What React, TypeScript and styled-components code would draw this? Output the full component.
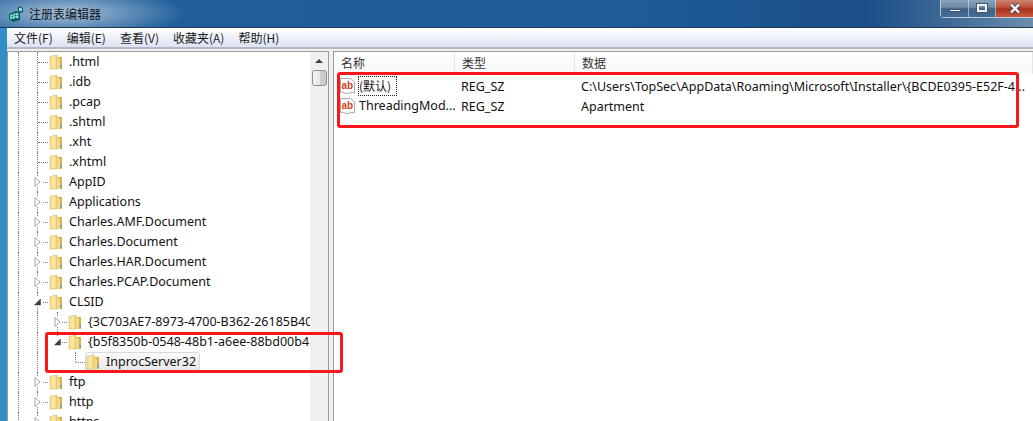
import styled, { createGlobalStyle } from 'styled-components';

const GlobalStyle = createGlobalStyle`
  html, body {
    margin: 0;
    padding: 0;
    background: #fff;
  }
`;

const fontStack = `"Noto Sans", "Noto Sans CJK SC", sans-serif`;
const cjkStack = `"Noto Sans CJK SC", "Noto Sans", sans-serif`;

const Window = styled.div`
  width: 1033px;
  height: 421px;
  overflow: hidden;
  position: relative;
  display: flex;
  flex-direction: column;
  background: #2f8fc6;
  font-family: ${fontStack};
  font-size: 12.5px;
  color: #111;
`;

const TitleBar = styled.div`
  height: 27px;
  flex: none;
  display: flex;
  align-items: flex-start;
  padding-left: 8px;
  border-bottom: 1px solid #1c3a58;
  background:
    radial-gradient(ellipse 120px 26px at 66px 13px, rgba(255, 255, 255, 0.62), rgba(255, 255, 255, 0) 100%),
    linear-gradient(90deg, #1f5f9c 0%, #1f5c98 60%, #1a4f88 84%, #3f6a96 92%, #6d8dae 100%);
`;

const TitleIcon = styled.svg`
  width: 16px;
  height: 16px;
  margin-top: 6px;
  flex: none;
`;

const TitleText = styled.span`
  margin: 5px 0 0 5px;
  font-family: ${cjkStack};
  font-size: 12px;
  line-height: 17px;
  color: #10161c;
`;

const Controls = styled.div`
  margin-left: auto;
  margin-top: -1px;
  display: flex;
  height: 18px;
  border: 1px solid rgba(225, 235, 245, 0.75);
  border-top: none;
  border-right: none;
  border-radius: 0 0 0 4px;
  box-sizing: content-box;
`;

const ControlButton = styled.div<{ $width: number; $close?: boolean }>`
  width: ${(p) => p.$width}px;
  display: flex;
  align-items: center;
  justify-content: center;
  border-right: ${(p) => (p.$close ? 'none' : '1px solid rgba(225, 235, 245, 0.55)')};
  background: ${(p) =>
    p.$close
      ? 'linear-gradient(180deg, #cf8c7e 0%, #c0503c 45%, #a8301e 55%, #c85a3c 100%)'
      : 'linear-gradient(180deg, #8ea6be 0%, #6d8aa8 45%, #3f6288 55%, #456c94 100%)'};
`;

const MinGlyph = styled.div`
  width: 10px;
  height: 3px;
  margin-top: 5px;
  background: #f4f6f8;
  border: 1px solid #45566a;
  box-sizing: content-box;
  height: 1px;
`;

const MaxGlyph = styled.div`
  width: 6px;
  height: 4px;
  border: 2px solid #f0f3f6;
  outline: 1px solid #45566a;
  box-sizing: content-box;
`;

const MenuBar = styled.div`
  height: 19px;
  flex: none;
  margin-left: 7px;
  display: flex;
  align-items: center;
  border-bottom: 2px solid #b4b8c4;
  background: linear-gradient(180deg, #ffffff 0%, #f4f6fb 30%, #dde3f3 100%);
`;

const MenuItem = styled.span`
  padding: 0 7px;
  font-family: ${cjkStack};
  font-size: 12px;
  line-height: 19px;
  color: #1a1a1a;
  white-space: nowrap;
`;

const Body = styled.div`
  flex: 1;
  min-height: 0;
  margin-left: 7px;
  display: flex;
  background: #f0f0f0;
  padding-top: 2px;
`;

const TreePane = styled.div`
  width: 322px;
  flex: none;
  display: flex;
  border: 1px solid #9a9a9a;
  border-bottom: none;
  background: #fff;
  box-sizing: border-box;
`;

const TreeList = styled.div`
  flex: 1;
  min-width: 0;
  overflow: hidden;
  padding-left: 10px;
  margin-top: 0;
`;

const TreeRow = styled.div`
  height: 20px;
  display: flex;
  white-space: nowrap;
`;

const Guide = styled.div<{ $width: number; $blank?: boolean }>`
  width: ${(p) => p.$width}px;
  flex: none;
  box-sizing: border-box;
  border-left: 1px ${(p) => (p.$blank ? 'none' : 'dotted')} #7d7d7d;
  margin-left: ${(p) => (p.$blank ? '1px' : '0')};
`;

const Connector = styled.div<{ $width: number; $elbow?: boolean }>`
  width: ${(p) => p.$width}px;
  flex: none;
  position: relative;

  &::before {
    content: '';
    position: absolute;
    left: 0;
    top: 0;
    height: ${(p) => (p.$elbow ? '10px' : '20px')};
    border-left: 1px dotted #7d7d7d;
  }

  &::after {
    content: '';
    position: absolute;
    left: 1px;
    right: 0;
    top: 10px;
    border-top: 1px dotted #7d7d7d;
  }
`;

const Expander = styled.svg`
  position: absolute;
  left: -4px;
  top: 5px;
  width: 9px;
  height: 10px;
  background: #fff;
  z-index: 1;
`;

const TreeItem = styled.div<{ $selected?: boolean }>`
  display: flex;
  align-items: center;
  gap: 6px;
  height: 20px;
  box-sizing: border-box;
  padding-right: ${(p) => (p.$selected ? '3px' : '0')};
  border: 1px solid ${(p) => (p.$selected ? '#d9d9d9' : 'transparent')};
  border-radius: 3px;
  background: ${(p) => (p.$selected ? 'linear-gradient(180deg, #fafafa, #e6e6e6)' : 'transparent')};
`;

const FolderSvg = styled.svg`
  width: 14px;
  height: 16px;
  flex: none;
`;

const ItemLabel = styled.span`
  line-height: 18px;
  color: #111;
`;

const ScrollBar = styled.div`
  width: 18px;
  flex: none;
  display: flex;
  flex-direction: column;
  align-items: center;
  background: #f0f0f0;
`;

const ScrollArrow = styled.div`
  height: 18px;
  width: 100%;
  display: flex;
  align-items: center;
  justify-content: center;

  &::before {
    content: '';
    border-left: 4px solid transparent;
    border-right: 4px solid transparent;
    border-bottom: 4px solid #404040;
  }
`;

const ScrollThumb = styled.div`
  width: 15px;
  height: 16px;
  box-sizing: border-box;
  border: 1px solid #8e8f8f;
  border-radius: 3px;
  background: linear-gradient(90deg, #f4f4f4 0%, #e8e8e8 50%, #d0d0d0 55%, #c8c8c8 100%);
`;

const Splitter = styled.div`
  width: 4px;
  flex: none;
`;

const ListPane = styled.div`
  flex: 1;
  min-width: 0;
  border: 1px solid #9a9a9a;
  border-right: none;
  border-bottom: none;
  background: #fff;
`;

const ColumnsHeader = styled.div`
  display: grid;
  grid-template-columns: 121px 120px 1fr;
  height: 21px;
  background: linear-gradient(180deg, #ffffff, #f7f8f9);
`;

const HeaderCell = styled.div`
  padding-left: 7px;
  font-family: ${cjkStack};
  font-size: 12px;
  line-height: 22px;
  color: #333;
  border-right: 1px solid #e3e5e7;
`;

const ValueRows = styled.div`
  padding-top: 3px;
`;

const ValueRow = styled.div`
  display: grid;
  grid-template-columns: 121px 120px 1fr;
  height: 20px;
  align-items: center;
`;

const NameCell = styled.div`
  display: flex;
  align-items: center;
  padding-left: 5px;
  gap: 2px;
  white-space: nowrap;
`;

const RegIcon = styled.svg`
  width: 17px;
  height: 18px;
  flex: none;
`;

const NameText = styled.span<{ $focused?: boolean }>`
  padding: 0 ${(p) => (p.$focused ? '6px' : '0')} 0 1px;
  height: 20px;
  line-height: 19px;
  outline: ${(p) => (p.$focused ? '1px dotted #222' : 'none')};
  outline-offset: -1px;
  font-family: ${(p) => (p.$focused ? cjkStack : fontStack)};
  font-size: ${(p) => (p.$focused ? '12px' : '12.5px')};
`;

const ValueCell = styled.div`
  padding-left: 6px;
  white-space: nowrap;
  overflow: hidden;
`;

const RedFrame = styled.div<{ $x: number; $y: number; $w: number; $h: number }>`
  position: absolute;
  left: ${(p) => p.$x}px;
  top: ${(p) => p.$y}px;
  width: ${(p) => p.$w}px;
  height: ${(p) => p.$h}px;
  box-sizing: border-box;
  border: 3px solid #f8181c;
  border-radius: 3px;
  pointer-events: none;
  z-index: 3;
`;

type TreeNode = {
  label: string;
  level: 1 | 2 | 3;
  state?: 'open' | 'closed';
  last?: boolean;
  selected?: boolean;
};

const nodes: TreeNode[] = [
  { label: '.html', level: 1 },
  { label: '.idb', level: 1 },
  { label: '.pcap', level: 1 },
  { label: '.shtml', level: 1 },
  { label: '.xht', level: 1 },
  { label: '.xhtml', level: 1 },
  { label: 'AppID', level: 1, state: 'closed' },
  { label: 'Applications', level: 1, state: 'closed' },
  { label: 'Charles.AMF.Document', level: 1, state: 'closed' },
  { label: 'Charles.Document', level: 1, state: 'closed' },
  { label: 'Charles.HAR.Document', level: 1, state: 'closed' },
  { label: 'Charles.PCAP.Document', level: 1, state: 'closed' },
  { label: 'CLSID', level: 1, state: 'open' },
  { label: '{3C703AE7-8973-4700-B362-26185B40', level: 2, state: 'closed' },
  { label: '{b5f8350b-0548-48b1-a6ee-88bd00b4', level: 2, state: 'open', last: true },
  { label: 'InprocServer32', level: 3, last: true, selected: true },
  { label: 'ftp', level: 1, state: 'closed' },
  { label: 'http', level: 1, state: 'closed' },
  { label: 'https', level: 1, state: 'closed' },
];

function Folder() {
  return (
    <FolderSvg viewBox='0 0 14 16'>
      <defs>
        <linearGradient id='folderFront' x1='0' y1='0' x2='1' y2='0'>
          <stop offset='0' stopColor='#f3dc8c' />
          <stop offset='0.6' stopColor='#f8e9ae' />
          <stop offset='1' stopColor='#eccb66' />
        </linearGradient>
      </defs>
      <path d='M1 2.5 L8 1 L8 15 L1 15 Z' fill='url(#folderFront)' stroke='#d9b95c' strokeWidth='0.6' />
      <path d='M8 3 L13 3 L13 15 L8 15 Z' fill='#d8b24a' />
      <path d='M8 3 L11 5 L11 15 L8 15 Z' fill='#f2d98a' />
      <rect x='11.5' y='11' width='1.5' height='2.5' fill='#4aa0c8' />
    </FolderSvg>
  );
}

function ExpanderIcon({ open }: { open: boolean }) {
  return (
    <Expander viewBox='0 0 9 10'>
      {open ? (
        <path d='M7.5 2 L7.5 8 L1.5 8 Z' fill='#3c3c3c' stroke='#3c3c3c' strokeWidth='0.5' />
      ) : (
        <path d='M2 0.5 L7 5 L2 9.5 Z' fill='#fff' stroke='#a6a6a6' strokeWidth='1' />
      )}
    </Expander>
  );
}

function Node({ node }: { node: TreeNode }) {
  const connectorWidth = node.level === 1 ? 11 : 10;
  return (
    <TreeRow>
      <Guide $width={19} />
      {node.level >= 2 && <Guide $width={20} />}
      {node.level === 3 && <Guide $width={17} $blank />}
      <Connector $width={connectorWidth} $elbow={node.last}>
        {node.state && <ExpanderIcon open={node.state === 'open'} />}
      </Connector>
      <TreeItem $selected={node.selected}>
        <Folder />
        <ItemLabel>{node.label}</ItemLabel>
      </TreeItem>
    </TreeRow>
  );
}

function RegValueIcon() {
  return (
    <RegIcon viewBox='0 0 17 18'>
      <path
        d='M1.5 1.5 L11.5 1.5 L15.5 5 L15.5 16 Q13 14.5 10.5 16 Q7 17.5 4.5 15.5 Q3 15 1.5 15.5 Z'
        fill='#fff'
        stroke='#a8a8a8'
        strokeWidth='1'
      />
      <text x='2.5' y='11.5' fontFamily='"Liberation Sans", sans-serif' fontWeight='700' fontSize='10' fill='#d2431c'>
        ab
      </text>
    </RegIcon>
  );
}

export default function App() {
  return (
    <Window>
      <GlobalStyle />
      <TitleBar>
        <TitleIcon viewBox='0 0 16 16'>
          <path d='M1 8 L8 5 L12 7 L12 14 L5 16 L1 13 Z' fill='#0f5a5a' />
          <path d='M2 9 L4.5 8 L4.5 10 L2 11 Z M5 8 L7.5 7 L7.5 9 L5 10 Z M8 7 L10.5 7.5 L10.5 9.5 L8 9 Z M2 11.5 L4.5 10.5 L4.5 13 L2 13 Z M5 10.5 L7.5 9.5 L7.5 12 L5 13 Z M8 9.5 L10.5 10 L10.5 12.5 L8 12 Z' fill='#7fe8e0' />
          <path d='M10 1 L13 0.5 L15 2.5 L15 6 L12 7 L10 5 Z' fill='#0f4a4a' />
          <path d='M11 2 L13 1.5 L14 3 L14 5 L12 5.5 L11 4 Z' fill='#8ff0e8' />
        </TitleIcon>
        <TitleText>注册表编辑器</TitleText>
        <Controls>
          <ControlButton $width={27}>
            <MinGlyph />
          </ControlButton>
          <ControlButton $width={26}>
            <MaxGlyph />
          </ControlButton>
          <ControlButton $width={37} $close>
            <svg width='12' height='11' viewBox='0 0 12 11'>
              <path d='M2 1.5 L10 9.5 M10 1.5 L2 9.5' stroke='#4a4a55' strokeWidth='4' />
              <path d='M2 1.5 L10 9.5 M10 1.5 L2 9.5' stroke='#f4f4f4' strokeWidth='2.4' />
            </svg>
          </ControlButton>
        </Controls>
      </TitleBar>
      <MenuBar>
        <MenuItem>文件(F)</MenuItem>
        <MenuItem>编辑(E)</MenuItem>
        <MenuItem>查看(V)</MenuItem>
        <MenuItem>收藏夹(A)</MenuItem>
        <MenuItem>帮助(H)</MenuItem>
      </MenuBar>
      <Body>
        <TreePane>
          <TreeList>
            {nodes.map((node) => (
              <Node key={node.label} node={node} />
            ))}
          </TreeList>
          <ScrollBar>
            <ScrollArrow />
            <ScrollThumb />
          </ScrollBar>
        </TreePane>
        <Splitter />
        <ListPane>
          <ColumnsHeader>
            <HeaderCell>名称</HeaderCell>
            <HeaderCell>类型</HeaderCell>
            <HeaderCell>数据</HeaderCell>
          </ColumnsHeader>
          <ValueRows>
            <ValueRow>
              <NameCell>
                <RegValueIcon />
                <NameText $focused>(默认)</NameText>
              </NameCell>
              <ValueCell>REG_SZ</ValueCell>
              <ValueCell>{'C:\\Users\\TopSec\\AppData\\Roaming\\Microsoft\\Installer\\{BCDE0395-E52F-4...'}</ValueCell>
            </ValueRow>
            <ValueRow>
              <NameCell>
                <RegValueIcon />
                <NameText>ThreadingMod...</NameText>
              </NameCell>
              <ValueCell>REG_SZ</ValueCell>
              <ValueCell>Apartment</ValueCell>
            </ValueRow>
          </ValueRows>
        </ListPane>
      </Body>
      <RedFrame $x={337} $y={72} $w={682} $h={56} />
      <RedFrame $x={45} $y={332} $w={298} $h={41} />
    </Window>
  );
}
